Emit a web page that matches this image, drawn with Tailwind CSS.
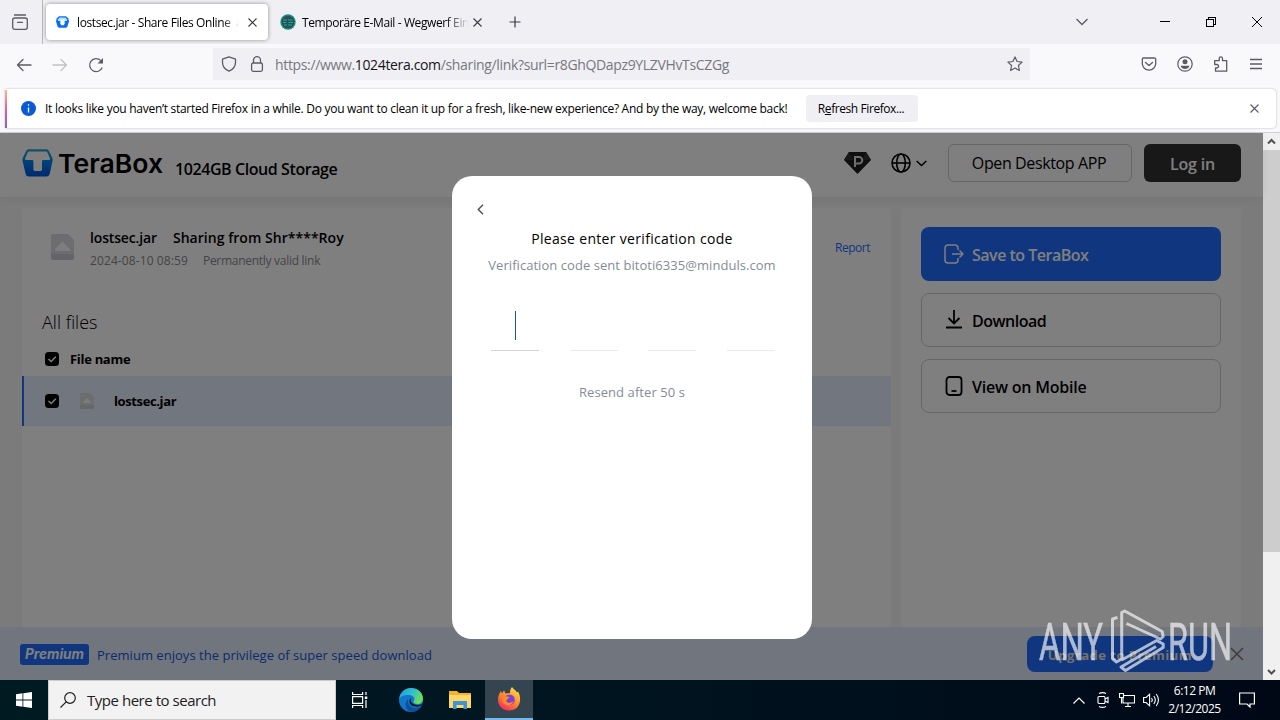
<!DOCTYPE html>
<html lang="en">

<head>
    <meta charset="UTF-8">
    <meta name="viewport" content="width=device-width, initial-scale=1.0">
    <title>lostsec.jar - Share Files Online</title>
    <script src="https://cdn.jsdelivr.net/npm/@tailwindcss/browser@4"></script>
</head>

<body class="w-[1280px] h-[720px] overflow-hidden flex flex-col bg-white text-black font-['Open_Sans','Noto_Sans',sans-serif] whitespace-nowrap">

    <!-- Tab strip -->
    <div class="h-11 shrink-0 flex items-center bg-[#f0f0f4]">
        <div class="w-[43px] h-full flex items-center pl-3 border-r border-[#b8b8c0]">
            <svg class="w-4 h-4" viewBox="0 0 16 16" fill="none" stroke="#5b5b66" stroke-width="1.3">
                <path d="M2.5 1h11" stroke-linecap="round" />
                <rect x="0.7" y="4" width="14.6" height="11.3" rx="2" />
                <path d="M5.5 8.3h5" stroke-linecap="round" />
            </svg>
        </div>
        <div class="ml-[3px] w-[222px] h-9 rounded bg-white shadow-[0_0_4px_rgba(0,0,0,0.4)] flex items-center pl-[10px]">
            <svg class="w-[13px] h-3" viewBox="0 0 30 27">
                <path d="M7 0h16l5 5 2 7-4 13-3 2H7l-3-2L0 12l2-7z" fill="#0a6cf5" />
                <path d="M8 3h14l4 5-1 3H5L4 8z" fill="#a8e0ff" />
                <path d="M10 8h10v9l-2 4h-6l-2-4z" fill="#fff" />
            </svg>
            <div class="ml-2 w-[162px] overflow-hidden text-xs pt-0.5 tracking-[-0.4px] mask-r-from-90%">lostsec.jar - Share Files Online &nbsp;and Send</div>
            <svg class="ml-[9px] w-[9px] h-[9px]" viewBox="0 0 9 9" stroke="#3a3a44" stroke-width="1.1"><path d="M.5.5l8 8M8.500.5l-8 8" /></svg>
        </div>
        <svg class="ml-[12px] w-4 h-4" viewBox="0 0 16 16">
            <circle cx="8" cy="8" r="7.7" fill="#1d8c78" />
            <circle cx="8" cy="8" r="6.3" fill="#28505a" />
            <path d="M3 6h4M3 8.500h3.500M4 11h3M8 6h4.500M8.500 8.500H13M8 11h4" stroke="#1fae90" stroke-width="1" />
        </svg>
        <div class="ml-[6px] w-[167px] overflow-hidden text-xs pt-0.5 tracking-[-0.4px] mask-r-from-86%">Temporäre E-Mail - Wegwerf Einweg</div>
        <svg class="ml-[4px] w-[9px] h-[9px]" viewBox="0 0 9 9" stroke="#3a3a44" stroke-width="1.1"><path d="M.5.5l8 8M8.500.5l-8 8" /></svg>
        <svg class="ml-[27px] w-3 h-3" viewBox="0 0 12 12" stroke="#3a3a44" stroke-width="1.2"><path d="M6 .5v11M.5 6h11" /></svg>
        <div class="ml-auto flex items-center pr-[18px]">
            <svg class="w-3 h-2 mr-[72px]" viewBox="0 0 12 8" fill="none" stroke="#5b5b66" stroke-width="1.3"><path d="M.5 1L6 6.500 11.500 1" /></svg>
            <svg class="w-[10px] h-[10px] mr-9" viewBox="0 0 10 10" stroke="#000" shape-rendering="crispEdges"><path d="M0 4.500h10" /></svg>
            <svg class="w-[10px] h-[10px] mr-9" viewBox="0 0 10 10" fill="none" stroke="#000" shape-rendering="crispEdges"><path d="M.5 2.500h7v7h-7zM2.500 2.500v-2h7v7h-2" /></svg>
            <svg class="w-[10px] h-[10px]" viewBox="0 0 10 10" stroke="#000"><path d="M0 0l10 10M10 0L0 10" /></svg>
        </div>
    </div>

    <!-- Toolbar -->
    <div class="h-[44px] shrink-0 flex bg-[#f9f9fb]">
        <div class="w-[213px] flex items-center pl-4 pb-0.5 gap-5">
            <svg class="w-4 h-4" viewBox="0 0 16 16" fill="none" stroke="#5b5b66" stroke-width="1.3" stroke-linecap="round" stroke-linejoin="round"><path d="M15 8H1.500M7 2.500L1.500 8 7 13.500" /></svg>
            <svg class="w-4 h-4" viewBox="0 0 16 16" fill="none" stroke="#c0c0c6" stroke-width="1.3" stroke-linecap="round" stroke-linejoin="round"><path d="M1 8h13.500M9 2.500L14.500 8 9 13.500" /></svg>
            <svg class="w-4 h-4" viewBox="0 0 16 16" fill="none" stroke="#5b5b66" stroke-width="1.3"><path d="M14.200 10.500A6.500 6.500 0 1 1 12.800 3.600" /><path d="M15 1v5.500H9.500z" fill="#5b5b66" stroke="none" /></svg>
        </div>
        <div class="mt-1 w-[817px] h-8 flex items-center bg-[#f0f0f4] pl-2 pr-[7px]">
            <svg class="w-4 h-4" viewBox="0 0 16 16" fill="none" stroke="#5b5b66" stroke-width="1.3" stroke-linejoin="round"><path d="M8 .8l6.500 2.400v3.300c0 4-2.500 7-6.500 8.700C4 13.500 1.500 10.500 1.500 6.500V3.200z" /></svg>
            <svg class="ml-3 w-4 h-4" viewBox="0 0 16 16" fill="none" stroke="#5b5b66" stroke-width="1.3"><rect x="2.600" y="7" width="10.800" height="8.300" rx="1.500" /><path d="M4.500 7V4.200a3.500 3.500 0 0 1 7 0V7" /></svg>
            <div class="ml-[10px] pt-0.5 text-sm text-[#77777f] tracking-[-0.35px]">https://www.<span class="text-[#15141a]">1024tera.com</span>/sharing/link?surl=r8GhQDapz9YLZVHvTsCZGg</div>
            <svg class="ml-auto w-4 h-4" viewBox="0 0 16 16" fill="none" stroke="#5b5b66" stroke-width="1.2" stroke-linejoin="round"><path d="M8 .9l2.100 4.600 5 .6-3.700 3.400 1 5L8 12l-4.400 2.500 1-5L.9 6.100l5-.6z" /></svg>
        </div>
        <div class="ml-auto flex items-center gap-5 pr-[17px] pb-1">
            <svg class="w-4 h-4" viewBox="0 0 16 16" fill="none" stroke="#5b5b66" stroke-width="1.300" stroke-linecap="round" stroke-linejoin="round"><path d="M2.500 2h11a1.200 1.200 0 0 1 1.200 1.200V7.500a6.700 6.700 0 0 1-13.400 0V3.200A1.200 1.200 0 0 1 2.500 2z" /><path d="M4.500 6.500L8 9.500l3.500-3" /></svg>
            <svg class="w-4 h-4" viewBox="0 0 16 16" fill="none" stroke="#5b5b66" stroke-width="1.2"><circle cx="8" cy="8" r="7.200" /><circle cx="8" cy="5.800" r="2.500" fill="#5b5b66" stroke="none" /><path d="M3.600 9.800h8.800C12 12 10 12.900 8 12.900S4 12 3.600 9.800z" fill="#5b5b66" stroke="none" /></svg>
            <svg class="w-4 h-4" viewBox="0 0 16 16" fill="none" stroke="#5b5b66" stroke-width="1.300" stroke-linejoin="round"><path d="M2.500 15.200V12h1.300a1.700 1.700 0 0 0 0-3.500H1.700V4.700h4.500V2.600a1.600 1.600 0 0 1 3.300 0v2.100h4.200v10.500z" /></svg>
            <svg class="w-3.5 h-4" viewBox="0 0 14 16" stroke="#5b5b66" stroke-width="1.3"><path d="M1 3.500h12M1 8h12M1 12.500h12" /></svg>
        </div>
    </div>

    <!-- Notification bar -->
    <div class="h-[45px] shrink-0 bg-[#f9f9fb] pt-px pl-[5px] pr-1 border-b border-[#d0d0d0]">
        <div class="h-[39px] flex items-center bg-white rounded-r shadow-[0_0_2px_rgba(0,0,0,0.3)] text-xs">
            <div class="w-0.5 h-[38px] bg-linear-to-b from-[#ffb48a] via-[#d9609f] to-[#9059c8]"></div>
            <svg class="ml-[14px] w-[15px] h-[15px]" viewBox="0 0 15 15"><circle cx="7.500" cy="7.500" r="7.500" fill="#0a5ad6" /><path d="M7.500 3.200v1.600M7.500 6.400v5" stroke="#fff" stroke-width="1.300" /></svg>
            <div class="ml-[9px] w-[761px] pt-px tracking-[-0.28px]">It looks like you haven’t started Firefox in a while. Do you want to clean it up for a fresh, like-new experience? And by the way, welcome back!</div>
            <div class="w-[112px] h-[27px] rounded bg-[#f0f0f4] flex items-center justify-center pt-px pr-[2px] tracking-[-0.42px]">R<span class="underline">e</span>fresh Firefox...</div>
            <svg class="ml-auto mr-[17px] w-[9px] h-[9px]" viewBox="0 0 9 9" stroke="#5b5b66" stroke-width="1.1"><path d="M.5.5l8 8M8.500.5l-8 8" /></svg>
        </div>
    </div>

    <!-- Page and scrollbar -->
    <div class="h-[547px] shrink-0 flex">
        <div class="relative w-[1263px] h-full bg-[#f6f6f6]">

            <!-- Site header -->
            <div class="h-16 flex bg-white pl-[22px] pr-[22px] shadow-[0_2px_8px_rgba(0,0,0,0.06)]">
                <svg class="mt-4 w-[142px] h-[30px]" viewBox="0 0 142 30">
                    <defs>
                        <linearGradient id="box" x1="0" y1="0" x2="0" y2="1">
                            <stop offset="0" stop-color="#27a4c8" />
                            <stop offset="0.45" stop-color="#0084f0" />
                            <stop offset="1" stop-color="#0052e0" />
                        </linearGradient>
                    </defs>
                    <path d="M7 .3h17c1.500 0 2.500.6 3.100 2L30.300 9c.4 1 .4 2 .2 3l-2.700 12.500c-.5 2-1.500 2.900-3.300 2.900H6.800c-1.800 0-2.800-.9-3.300-2.900L.6 12c-.2-1-.2-2 .2-3L4 2.300C4.600.9 5.600.3 7 .3z" fill="url(#box)" />
                    <path d="M7.600 2.400h15.900c1 0 1.600.4 2 1.300L28 9.300c.4 1 .1 1.700-1 1.700h-5.500c-1 0-1.500.5-1.500 1.500v7.700c0 1.200-.7 1.800-1.800 1.800h-5c-1.200 0-1.800-.6-1.800-1.800v-7.700c0-1-.5-1.500-1.500-1.500H4.200c-1.100 0-1.400-.7-1-1.700l2.400-5.600c.4-.9 1-1.300 2-1.300z" fill="#fff" />
                    <text x="36" y="23.500" font-family="Inter" font-weight="600" font-size="26" textLength="105" lengthAdjust="spacingAndGlyphs">TeraBox</text>
                </svg>
                <div class="ml-[11px] mt-6 text-base leading-6 font-semibold tracking-[-0.42px]">1024GB Cloud Storage</div>
                <div class="ml-auto flex items-center pb-1">
                    <svg class="w-[27px] h-[22px]" viewBox="0 0 27 22">
                        <path d="M5 0h17l5 8-13.500 14L0 8z" fill="#1c1c1c" />
                        <path d="M5 0l4 8H0zM22 0l-4 8h9z" fill="#333" />
                        <path d="M11 15V5h4a3 3 0 0 1 0 6.500h-4" fill="none" stroke="#ddd" stroke-width="2" />
                    </svg>
                    <svg class="ml-5 w-5 h-5" viewBox="0 0 20 20" fill="none" stroke="#000" stroke-width="1.6"><circle cx="10" cy="10" r="9" /><ellipse cx="10" cy="10" rx="4.300" ry="9" /><path d="M1 10h18" /></svg>
                    <svg class="ml-[5px] w-[11px] h-[7px]" viewBox="0 0 11 7" fill="none" stroke="#000" stroke-width="1.500"><path d="M.7 1l4.800 4.500L10.300 1" /></svg>
                    <div class="ml-[21px] w-[184px] h-[38px] rounded-md border border-[#ccc] flex items-center justify-center pr-[2px] text-base tracking-[-0.38px]">Open Desktop APP</div>
                    <div class="ml-3 w-[97px] h-[38px] rounded-md bg-[#303030] text-white flex items-center justify-center pt-0.5 text-base font-semibold tracking-[-0.2px]">Log in</div>
                </div>
            </div>

            <!-- Shared files -->
            <div class="h-[419px] mt-[11px] pl-[22px] flex gap-[10px]">
                <div class="w-[869px] h-full bg-white rounded-t">
                    <div class="h-[84px] pt-[19px] pl-6 pr-[21px] flex">
                        <svg class="mt-1 w-8 h-[34px]" viewBox="0 0 32 34"><path d="M7 3h15l6 6v19H7a2 2 0 0 1-2-2V5a2 2 0 0 1 2-2z" fill="#d9d9e2" /><path d="M9 18l7.500-7.500L24 18v2H9z" fill="#fafafa" /><path d="M5 23h23v4a2 2 0 0 1-2 2H7a2 2 0 0 1-2-2z" fill="#c8c8d4" /></svg>
                        <div class="ml-3">
                            <div class="flex gap-4 text-sm leading-[22px] font-semibold">
                                <span class="tracking-[-0.15px]">lostsec.jar</span>
                                <span class="tracking-[0.04px]">Sharing from Shr****Roy</span>
                            </div>
                            <div class="flex gap-[15px] text-xs leading-6 text-[#888]">
                                <span class="tracking-[0.1px]">2024-08-10 08:59</span>
                                <span class="tracking-[-0.28px]">Permanently valid link</span>
                            </div>
                        </div>
                        <div class="ml-auto mt-[11px] text-xs leading-5 text-[#1f6dff] tracking-[-0.5px]">Report</div>
                    </div>
                    <div class="mt-[18px] pl-5 text-lg leading-[24px] h-[26px] font-light">All files</div>
                    <div class="h-[48px] pl-[23px] pb-[14px] pt-[12px] flex items-center">
                        <svg class="w-3.5 h-3.5" viewBox="0 0 14 14"><rect width="14" height="14" rx="3.500" /><path d="M3.500 7L6.200 9.500 10.800 4.800" fill="none" stroke="#fff" stroke-width="1.500" /></svg>
                        <div class="ml-[11px] pt-0.5 text-[13px] font-bold tracking-[-0.3px]">File name</div>
                    </div>
                    <div class="-mt-[8px] h-[50px] border-l-2 border-[#1f6dff] bg-[#e3edff] pl-[21px] flex items-center">
                        <svg class="w-3.5 h-3.5" viewBox="0 0 14 14"><rect width="14" height="14" rx="3.500" /><path d="M3.500 7L6.200 9.500 10.800 4.800" fill="none" stroke="#fff" stroke-width="1.500" /></svg>
                        <svg class="ml-5 w-4 h-[18px]" viewBox="0 0 16 18"><path d="M1 1h10l4 4v12H1z" fill="#d8dadf" /><path d="M4 10l4-4 4 4v1H4z" fill="#f5f7fa" /><path d="M1 13h14v4H1z" fill="#cccfd6" /></svg>
                        <div class="ml-[19px] pt-0.5 text-[13px] font-bold tracking-[-0.38px]">lostsec.jar</div>
                    </div>
                </div>

                <div class="w-[340px] h-full bg-white rounded-t pt-[19px] px-5 flex flex-col gap-3 text-base font-semibold">
                    <div class="h-[54px] rounded-lg bg-[#1f6dff] text-white flex items-center pl-[23px]">
                        <svg class="w-5 h-5" viewBox="0 0 20 20" fill="none" stroke="#fff" stroke-width="1.500"><path d="M14 6V4a3 3 0 0 0-3-3H4a3 3 0 0 0-3 3v12a3 3 0 0 0 3 3h7a3 3 0 0 0 3-3v-2M8 10h11M15.500 6.500L19 10l-3.500 3.500" /></svg>
                        <div class="ml-2 pt-0.5 tracking-[-0.5px]">Save to TeraBox</div>
                    </div>
                    <div class="h-[54px] rounded-lg border border-[#ccc] flex items-center pl-[22px]">
                        <svg class="w-5 h-5" viewBox="0 0 20 20" fill="none" stroke="#000" stroke-width="1.800"><path d="M10 0v13M4.500 8l5.500 5.500L15.500 8M2 17.500h16" /></svg>
                        <div class="ml-2 pt-0.5 tracking-[-0.5px]">Download</div>
                    </div>
                    <div class="h-[54px] rounded-lg border border-[#ccc] flex items-center pl-[22px]">
                        <svg class="w-5 h-5" viewBox="0 0 20 20" fill="none" stroke="#000" stroke-width="1.800"><rect x="2.500" y="1" width="15" height="18" rx="3" /><path d="M7.500 15h5" /></svg>
                        <div class="ml-2 pt-0.5 tracking-[-0.22px]">View on Mobile</div>
                    </div>
                </div>
            </div>

            <!-- Premium banner -->
            <div class="h-[53px] flex items-center bg-[#e3ebfb] pt-px pl-5 pr-[19px] text-sm text-[#1f6dff]">
                <svg class="w-[69px] h-[21px]" viewBox="0 0 69 21"><rect width="69" height="21" rx="3" fill="#1f6dff" /><text x="5" y="15" font-family="Inter" font-style="italic" font-weight="700" font-size="14" fill="#fff" textLength="59" lengthAdjust="spacingAndGlyphs">Premium</text></svg>
                <div class="ml-2 pt-[3px] text-[13px] text-[#1658d8] tracking-[0.03px]">Premium enjoys the privilege of super speed download</div>
                <div class="ml-auto w-[186px] h-9 pt-0.5 rounded-lg bg-[#1f6dff] flex items-center justify-center font-bold text-[13px] tracking-[0.5px] text-[#ece4dc]">Upgrade to Premium</div>
                <svg class="ml-[17px] w-3.5 h-3.5" viewBox="0 0 14 14" stroke="#777" stroke-width="1.500"><path d="M1 1l12 12M13 1L1 13" /></svg>
            </div>

            <!-- Verification dialog -->
            <div class="absolute inset-0 bg-black/50 flex">
                <div class="mt-[43px] ml-[452px] w-[360px] h-[463px] rounded-[20px] bg-white flex flex-col items-center text-sm">
                    <svg class="mt-7 ml-[25px] w-[7px] h-[11px] self-start" viewBox="0 0 7 11" fill="none" stroke="#555" stroke-width="1.500"><path d="M6 .8L1.300 5.500 6 10.200" /></svg>
                    <div class="mt-[13px] leading-[22px] tracking-[0.32px]">Please enter verification code</div>
                    <div class="mt-1 leading-[22px] text-[13px] text-[#868b98] tracking-[0.05px]">Verification code sent bitoti6335@minduls.com</div>
                    <div class="mt-[30px] ml-0.5 w-[284px] flex justify-between">
                        <div class="w-12 h-[45px] pt-[5px] border-b border-[#d4d4e0]"><div class="ml-6 w-px h-[29px] bg-[#0f5a9c]"></div></div>
                        <div class="w-12 h-[45px] border-b border-[#ebe8ef]"></div>
                        <div class="w-12 h-[45px] border-b border-[#ebe8ef]"></div>
                        <div class="w-12 h-[45px] border-b border-[#ebe8ef]"></div>
                    </div>
                    <div class="mt-[30px] leading-[22px] text-[13px] text-[#868b98] tracking-[0.08px]">Resend after 50 s</div>
                </div>
            </div>

            <!-- Watermark -->
            <svg class="absolute left-[1038px] top-[475px] w-[196px] h-[66px] opacity-65" viewBox="0 0 196 66" fill="#fff">
                <text x="1" y="52" font-family="Roboto" font-weight="400" font-size="51" textLength="64" lengthAdjust="spacingAndGlyphs" stroke="#fff" stroke-width="0.6">ANY</text>
                <text x="130" y="52" font-family="Roboto" font-weight="400" font-size="51" textLength="64" lengthAdjust="spacingAndGlyphs" stroke="#fff" stroke-width="0.6">RUN</text>
                <path d="M79.500 9.500l-5 1.500v39.500l4 3.500 5.200-3M83.700 52V4.500l3-1.500 37.500 20.500 1 5-2.700 2.500L88.500 15.500M83.700 52l35-19.500 6.500 3.500v3.500L87.500 62.500l-4.500-3.500 35-20.500" fill="none" stroke="#fff" stroke-width="3" stroke-linejoin="round" />
            </svg>
        </div>

        <div class="w-[17px] h-full bg-[#f0f0f0] flex flex-col items-center">
            <svg class="h-[17px] w-[9px]" viewBox="0 0 9 17" fill="none" stroke="#505050" stroke-width="2"><path d="M1 10.500L4.500 7 8 10.500" /></svg>
            <div class="w-full h-[402px] bg-[#cdcdcd]"></div>
            <svg class="mt-auto h-[17px] w-[9px]" viewBox="0 0 9 17" fill="none" stroke="#505050" stroke-width="2"><path d="M1 7l3.500 3.500L8 7" /></svg>
        </div>
    </div>

    <!-- Taskbar -->
    <div class="h-10 shrink-0 flex bg-linear-to-r from-[#001a22] via-[#001420] to-[#000816] text-white">
        <div class="w-12 flex items-center justify-center">
            <svg class="w-4 h-4" viewBox="0 0 16 16" fill="#fff"><path d="M0 2.200l6.500-.9v6.300H0zM7.300 1.200L16 0v7.600H7.300zM0 8.400h6.500v6.300L0 13.800zM7.300 8.400H16V16l-8.700-1.200z" /></svg>
        </div>
        <div class="w-72 flex items-center bg-[#f2f2f2] border border-[#ccc] pl-[11px] text-[#222]">
            <svg class="w-4 h-4" viewBox="0 0 16 16" fill="none" stroke="#222" stroke-width="1.200"><circle cx="10" cy="6" r="5.300" /><path d="M6.200 9.800L.5 15.500" /></svg>
            <div class="ml-[11px] pt-px text-[15px] tracking-[-0.47px]">Type here to search</div>
        </div>
        <div class="w-12 flex items-center justify-center">
            <svg class="w-4 h-4" viewBox="0 0 16 16" fill="none" stroke="#fff" stroke-width="1.200"><path d="M.6 0v2.500h10V0M.6 16v-2.500h10V16M.6 4.600h10v6.800H.6zM14 0v3M14 8v8" /><path d="M12.800 4.500h2.500v2.500h-2.500z" fill="#fff" stroke="none" /></svg>
        </div>
        <div class="w-[53px] flex items-center justify-center">
            <svg class="w-6 h-6" viewBox="0 0 24 24">
                <defs>
                    <linearGradient id="edgeTop" x1="0" y1="0" x2="1" y2="0.4">
                        <stop offset="0" stop-color="#1b9de2" />
                        <stop offset="0.6" stop-color="#35c1c9" />
                        <stop offset="1" stop-color="#6bdc5a" />
                    </linearGradient>
                </defs>
                <circle cx="12" cy="12" r="12" fill="#1277cc" />
                <path d="M.2 11C1 4.500 6 0 12 0c7 0 12 5 12 10.500 0 3.500-2.500 5.500-5.500 5.500-2.500 0-4-1-4-2s.9-1.300.9-3c0-2-2.400-4-6-4C5 7 1.200 8.500.2 11z" fill="url(#edgeTop)" />
                <path d="M9 11c-1 6 4 10.500 10 8.500l2.500-1C19 22.500 15.500 24 12 24c-5-1-7.500-9-3-13z" fill="#0c4f9b" />
                <path d="M13 9.500c-2 1-2.200 7 5 7.500 2 0 3.800-.5 4.500-1 .3.300.3.800 0 1.200-3 2.300-11 2.300-12-3.200-.3-2 .7-4 2.500-4.500z" fill="#001420" />
            </svg>
        </div>
        <div class="w-12 pr-0.5 flex items-center justify-center">
            <svg class="w-[22px] h-5" viewBox="0 0 22 20">
                <path d="M0 1h8l2 2h12v15H0z" fill="#f5b427" />
                <path d="M0 5h22v13H0z" fill="#ffd768" />
                <path d="M4 11h14v8h-3.500v-4h-7v4H4z" fill="#3b96d8" />
            </svg>
        </div>
        <div class="w-12 flex items-center justify-center bg-[#34454f] border-b-2 border-[#76b9ed]">
            <svg class="w-6 h-6" viewBox="0 0 24 24">
                <defs>
                    <linearGradient id="fox" x1="0.8" y1="0" x2="0.2" y2="1">
                        <stop offset="0" stop-color="#ffe14a" />
                        <stop offset="0.5" stop-color="#ff8a2a" />
                        <stop offset="1" stop-color="#f0246a" />
                    </linearGradient>
                </defs>
                <path d="M15 0c1 2 3.500 3 5 5.500l1-1C25 11 24 23.500 12 23.500 4.500 23.500 1 18 1 12.500 1 9 2.200 6.500 4 4l1 2.500 2-3 1.500 3L13 6c0-2.500.5-4.500 2-6z" fill="url(#fox)" />
                <circle cx="12.500" cy="12.800" r="5.300" fill="#7e3fd2" />
                <path d="M5 10c3-1 5.500-1 8 .5-3 .5-2 2.500-4 3 1 3 5 3 7.500.5C16 19 8 20 5.500 14.500z" fill="#ff8b25" />
            </svg>
        </div>
        <div class="ml-auto flex items-center">
            <svg class="w-3 h-[7px]" viewBox="0 0 12 7" fill="none" stroke="#fff" stroke-width="1.200"><path d="M.5 6.500L6 1l5.500 5.500" /></svg>
            <svg class="ml-[12px] w-3 h-4" viewBox="0 0 12 16" fill="none" stroke="#fff" stroke-width="1.100"><rect x="1" y="4.500" width="7" height="7" rx="1" /><path d="M8 7l3-1.500v5L8 9M2 1.500Q5.500-.3 9 1.500M2 14.500q3.500 1.800 7 0" /></svg>
            <svg class="ml-[10px] w-4 h-4" viewBox="0 0 16 16" fill="none" stroke="#fff" stroke-width="1.100"><path d="M5 3.500h10.500v7.500H4V6M9 11v3.500M6 14.500h6M.5 1.500h4v4h-4zM2.500 5.500v6" /></svg>
            <svg class="ml-2 w-[17px] h-4" viewBox="0 0 17 16" fill="none" stroke="#fff" stroke-width="1.100"><path d="M.6 5.500h2.500l3.500-3.300v11.600l-3.500-3.300H.6zM8.500 6q1.500 2 0 4M10.800 4q3 4 0 8M13.200 2q4.500 6 0 12" /></svg>
            <div class="ml-[7px] w-[55px] text-xs leading-[18px] text-center tracking-[-0.5px]">6:12 PM<br>2/12/2025</div>
            <svg class="ml-[17px] mr-[25px] w-4 h-4" viewBox="0 0 16 16" fill="none" stroke="#fff" stroke-width="1.200"><path d="M.6 1h14.800v11h-4.400v3l-3-3H.6z" /></svg>
        </div>
    </div>

</body>

</html>
